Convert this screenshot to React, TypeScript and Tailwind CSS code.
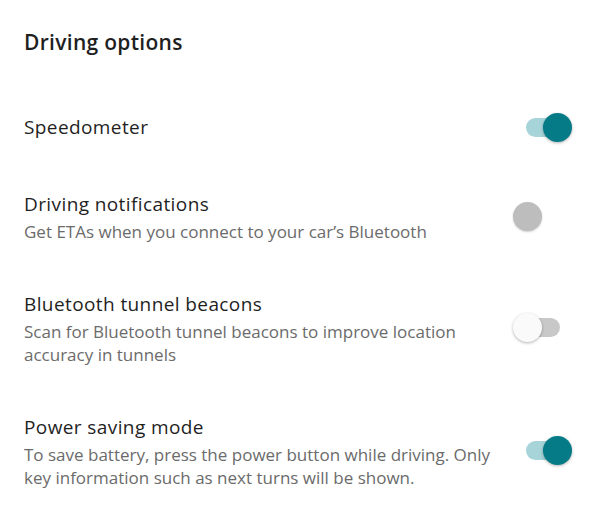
import React from 'react';

type Option = {
    title: string;
    subtitle?: string;
    state: 'on' | 'off' | 'disabled';
};

const options: Option[] = [
    { title: 'Speedometer', state: 'on' },
    { title: 'Driving notifications', subtitle: 'Get ETAs when you connect to your car’s Bluetooth', state: 'disabled' },
    { title: 'Bluetooth tunnel beacons', subtitle: 'Scan for Bluetooth tunnel beacons to improve location accuracy in tunnels', state: 'off' },
    { title: 'Power saving mode', subtitle: 'To save battery, press the power button while driving. Only key information such as next turns will be shown.', state: 'on' },
];

const Toggle: React.FC<{ state: Option['state'] }> = ({ state }) => {
    if (state === 'disabled') {
        return (
            <div className="relative w-[60px] h-[30px] shrink-0">
                <div className="absolute left-[1px] top-px w-[29px] h-[29px] rounded-full bg-[#bdbdbd] shadow-[0_1px_2px_rgba(0,0,0,0.2)]" />
            </div>
        );
    }
    const on = state === 'on';
    return (
        <div className="relative w-[60px] h-[30px] shrink-0">
            <div className={`absolute left-[14px] top-[6px] w-[34px] h-[19px] rounded-full ${on ? 'bg-[#a6d4d9]' : 'bg-[#c8c8c8]'}`} />
            <div
                className={`absolute top-px w-[29px] h-[29px] rounded-full shadow-[0_1px_3px_rgba(0,0,0,0.3)] ${on ? 'left-[31px] bg-[#047b86]' : 'left-[1px] bg-[#fafafa]'}`}
            />
        </div>
    );
};

const App: React.FC = () => {
    return (
        <div className="w-[600px] h-[528px] bg-white font-['Open_Sans',sans-serif] text-[#1f1f1f] overflow-hidden">
            <h1 className="pl-6 pt-[27px] text-[21px] leading-[30px] font-semibold tracking-[0.3px]">Driving options</h1>

            <div className="flex flex-col gap-[45px] pl-6 pr-[28px] mt-[54px]">
                {options.map((o) => (
                    <div key={o.title} className="flex items-center justify-between gap-2">
                        <div className="flex flex-col max-w-[472px]">
                            <span className="text-[19px] leading-[32px] tracking-[0.4px]">{o.title}</span>
                            {o.subtitle && (
                                <span className="text-[17px] leading-[23px] text-[#6b6b6b]">{o.subtitle}</span>
                            )}
                        </div>
                        <Toggle state={o.state} />
                    </div>
                ))}
            </div>
        </div>
    );
};

export default App;
